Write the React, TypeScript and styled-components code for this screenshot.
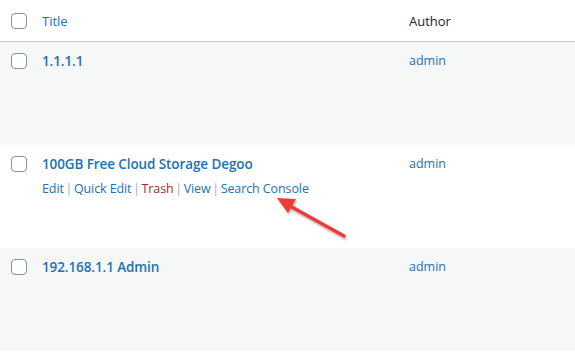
import { createGlobalStyle, styled } from "styled-components"

const Global = createGlobalStyle`
    html, body {
        margin: 0;
        padding: 0;
        background: #fff;
    }
    body {
        font-family: "Open Sans", "Noto Sans", sans-serif;
        color: #1d2327;
    }
`

const Table = styled.div`
    position: relative;
    width: 575px;
    height: 355px;
    overflow: hidden;
    background: #fff;
`

const Row = styled.div<{ $alt?: boolean; $head?: boolean }>`
    display: grid;
    grid-template-columns: 42px 367px 1fr;
    height: ${(p) => (p.$head ? "42px" : "103px")};
    background: ${(p) => (p.$alt ? "#f6f7f7" : "#fff")};
    border-bottom: ${(p) => (p.$head ? "1px solid #c3c4c7" : "none")};
    box-sizing: border-box;
    align-items: ${(p) => (p.$head ? "center" : "start")};
`

const CheckCell = styled.div<{ $head?: boolean }>`
    display: flex;
    justify-content: flex-start;
    padding-left: 11px;
    padding-top: ${(p) => (p.$head ? "0" : "11px")};
`

const Box = styled.span`
    display: block;
    width: 16px;
    height: 16px;
    box-sizing: border-box;
    border: 1px solid #8c8f94;
    border-radius: 4px;
    background: #fff;
`

const Cell = styled.div<{ $head?: boolean }>`
    padding-top: ${(p) => (p.$head ? "0" : "9px")};
    font-size: 13px;
`

const HeadText = styled.span<{ $link?: boolean }>`
    font-size: 13px;
    color: ${(p) => (p.$link ? "#2271b1" : "#1d2327")};
`

const TitleLink = styled.a`
    display: block;
    font-size: 13.5px;
    font-weight: 600;
    color: #2271b1;
    text-decoration: none;
    line-height: 20px;
    letter-spacing: -0.1px;
`

const Actions = styled.div`
    margin-top: 6px;
    font-size: 12.5px;
    line-height: 18px;
    color: #a7aaad;
    letter-spacing: -0.1px;
    word-spacing: -1.5px;
`

const Action = styled.a<{ $danger?: boolean }>`
    color: ${(p) => (p.$danger ? "#a8292a" : "#2271b1")};
    text-decoration: none;
    word-spacing: 0;
`

const AuthorLink = styled.a`
    display: block;
    font-size: 12.5px;
    line-height: 20px;
    color: #2271b1;
    text-decoration: none;
`

const Arrow = styled.svg`
    position: absolute;
    left: 0;
    top: 0;
    pointer-events: none;
`

const posts = [
    { title: "1.1.1.1", actions: false },
    { title: "100GB Free Cloud Storage Degoo", actions: true },
    { title: "192.168.1.1 Admin", actions: false },
]

export default function App() {
    return (
        <>
            <Global />
            <Table>
                <Row $head>
                    <CheckCell $head>
                        <Box />
                    </CheckCell>
                    <Cell $head>
                        <HeadText $link>Title</HeadText>
                    </Cell>
                    <Cell $head>
                        <HeadText>Author</HeadText>
                    </Cell>
                </Row>
                {posts.map((post, i) => (
                    <Row key={post.title} $alt={i % 2 === 0}>
                        <CheckCell>
                            <Box />
                        </CheckCell>
                        <Cell>
                            <TitleLink href="#">{post.title}</TitleLink>
                            {post.actions && (
                                <Actions>
                                    <Action href="#">Edit</Action> |{" "}
                                    <Action href="#">Quick Edit</Action> |{" "}
                                    <Action href="#" $danger>
                                        Trash
                                    </Action>{" "}
                                    | <Action href="#">View</Action> |{" "}
                                    <Action href="#">Search Console</Action>
                                </Actions>
                            )}
                        </Cell>
                        <Cell>
                            <AuthorLink href="#">admin</AuthorLink>
                        </Cell>
                    </Row>
                ))}
                <Arrow width="575" height="355" viewBox="0 0 575 355">
                    <defs>
                        <filter id="sh" x="-20%" y="-20%" width="140%" height="140%">
                            <feDropShadow dx="1" dy="2" stdDeviation="1.2" floodColor="#000" floodOpacity="0.3" />
                        </filter>
                    </defs>
                    <g filter="url(#sh)">
                        <line x1="344" y1="236" x2="290" y2="206" stroke="#ee3b36" strokeWidth="3.5" strokeLinecap="round" />
                        <polygon points="277,198 296,199 288,213" fill="#ee3b36" />
                    </g>
                </Arrow>
            </Table>
        </>
    )
}
